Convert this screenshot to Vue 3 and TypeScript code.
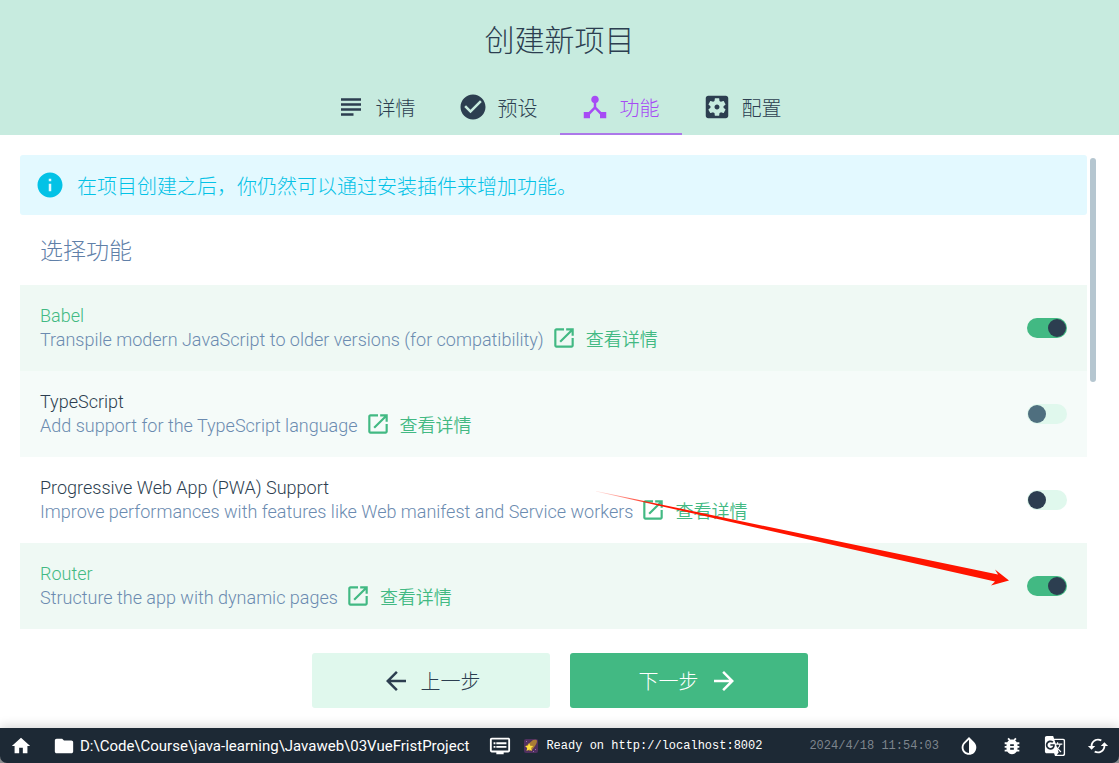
<script setup lang="ts">
import { ref } from 'vue'

interface Tab {
  id: string
  label: string
  icon: string
}

interface Feature {
  id: string
  name: string
  description: string
  enabled: boolean
  hovered?: boolean
}

const icons = {
  subject: 'M14 17H4v2h10v-2zm6-8H4v2h16V9zM4 15h16v-2H4v2zM4 5v2h16V5H4z',
  check: 'M12 2C6.48 2 2 6.48 2 12s4.48 10 10 10 10-4.48 10-10S17.52 2 12 2zm-2 15l-5-5 1.41-1.41L10 14.17l7.59-7.59L19 8l-9 9z',
  hub: 'M17 16l-4-4V8.82C14.16 8.4 15 7.3 15 6c0-1.66-1.34-3-3-3S9 4.34 9 6c0 1.3.84 2.4 2 2.82V12l-4 4H3v5h5v-3.05l4-4.2 4 4.2V21h5v-5h-4z',
  settings: 'M12 10c-1.1 0-2 .9-2 2s.9 2 2 2 2-.9 2-2-.9-2-2-2zm7-7H5c-1.11 0-2 .9-2 2v14c0 1.1.89 2 2 2h14c1.11 0 2-.9 2-2V5c0-1.1-.89-2-2-2zm-1.75 9c0 .23-.02.46-.05.68l1.48 1.16c.13.11.17.3.08.45l-1.4 2.42c-.09.15-.27.21-.43.15l-1.74-.7c-.36.28-.76.51-1.18.69l-.26 1.85c-.03.17-.18.3-.35.3h-2.8c-.17 0-.32-.13-.35-.29l-.26-1.85c-.43-.18-.82-.41-1.18-.69l-1.74.7c-.16.06-.34 0-.43-.15l-1.4-2.42c-.09-.15-.05-.34.08-.45l1.48-1.16c-.03-.23-.05-.46-.05-.69 0-.23.02-.46.05-.68l-1.48-1.16c-.13-.11-.17-.3-.08-.45l1.4-2.42c.09-.15.27-.21.43-.15l1.74.7c.36-.28.76-.51 1.18-.69l.26-1.85c.03-.17.18-.3.35-.3h2.8c.17 0 .32.13.35.29l.26 1.85c.43.18.82.41 1.18.69l1.74-.7c.16-.06.34 0 .43.15l1.4 2.42c.09.15.05.34-.08.45l-1.48 1.16c.03.23.05.46.05.69z',
  info: 'M12 2C6.48 2 2 6.48 2 12s4.48 10 10 10 10-4.48 10-10S17.52 2 12 2zm1 15h-2v-6h2v6zm0-8h-2V7h2v2z',
  open: 'M19 19H5V5h7V3H5c-1.11 0-2 .9-2 2v14c0 1.1.89 2 2 2h14c1.1 0 2-.9 2-2v-7h-2v7zM14 3v2h3.59l-9.83 9.83 1.41 1.41L19 6.41V10h2V3h-7z',
  back: 'M20 11H7.83l5.59-5.59L12 4l-8 8 8 8 1.41-1.41L7.83 13H20v-2z',
  forward: 'M12 4l-1.41 1.41L16.17 11H4v2h12.17l-5.58 5.59L12 20l8-8z',
  home: 'M10 20v-6h4v6h5v-8h3L12 3 2 12h3v8z',
  folder: 'M10 4H4c-1.1 0-1.99.9-1.99 2L2 18c0 1.1.9 2 2 2h16c1.1 0 2-.9 2-2V8c0-1.1-.9-2-2-2h-8l-2-2z',
  dvr: 'M21 3H3c-1.1 0-2 .9-2 2v12c0 1.1.9 2 2 2h5v2h8v-2h5c1.1 0 1.99-.9 1.99-2L23 5c0-1.1-.9-2-2-2zm0 14H3V5h18v12zm-2-9H8v2h11V8zm0 4H8v2h11v-2zM7 8H5v2h2V8zm0 4H5v2h2v-2z',
  invert: 'M17.66 7.93L12 2.27 6.34 7.93c-3.12 3.12-3.12 8.19 0 11.31C7.9 20.8 9.95 21.58 12 21.58c2.05 0 4.1-.78 5.66-2.34 3.12-3.12 3.12-8.19 0-11.31zM12 19.59c-1.6 0-3.11-.62-4.24-1.76C6.62 16.69 6 15.19 6 13.59s.62-3.11 1.76-4.24L12 5.1v14.49z',
  bug: 'M20 8h-2.81c-.45-.78-1.07-1.45-1.82-1.96L17 4.41 15.59 3l-2.17 2.17C12.96 5.06 12.49 5 12 5c-.49 0-.96.06-1.41.17L8.41 3 7 4.41l1.62 1.63C7.88 6.55 7.26 7.22 6.81 8H4v2h2.09c-.05.33-.09.66-.09 1v1H4v2h2v1c0 .34.04.67.09 1H4v2h2.81c1.04 1.79 2.97 3 5.19 3s4.15-1.21 5.19-3H20v-2h-2.09c.05-.33.09-.66.09-1v-1h2v-2h-2v-1c0-.34-.04-.67-.09-1H20V8zm-6 8h-4v-2h4v2zm0-4h-4v-2h4v2z',
  translate: 'M21 4H11l-1-3H3c-1.1 0-2 .9-2 2v15c0 1.1.9 2 2 2h8l1 3h9c1.1 0 2-.9 2-2V6c0-1.1-.9-2-2-2zM7 16c-2.76 0-5-2.24-5-5s2.24-5 5-5c1.35 0 2.48.5 3.35 1.3L9.03 8.57c-.38-.36-1.04-.78-2.03-.78-1.74 0-3.15 1.44-3.15 3.21S5.26 14.21 7 14.21c2.01 0 2.84-1.44 2.92-2.41H7v-1.71h4.68c.07.31.12.61.12 1.02C11.8 13.97 9.89 16 7 16zm6.17-5.42h3.7c-.43 1.25-1.11 2.43-2.05 3.47-.31-.35-.6-.72-.86-1.1l-.79-2.37zm8.33 9.92c0 .55-.45 1-1 1H14l2-2.5-1.04-3.1 3.1 3.1.92-.92-3.3-3.25.02-.02c1.13-1.25 1.93-2.69 2.4-4.22H20v-1.3h-4.53V8h-1.29v1.29h-1.44L11.46 5.5h9.04c.55 0 1 .45 1 1v14z',
  loop: 'M19 8l-4 4h3c0 3.31-2.69 6-6 6-1.01 0-1.97-.25-2.8-.7l-1.46 1.46C8.97 19.54 10.43 20 12 20c4.42 0 8-3.58 8-8h3l-4-4zM6 12c0-3.31 2.69-6 6-6 1.01 0 1.97.25 2.8.7l1.46-1.46C15.03 4.46 13.57 4 12 4c-4.42 0-8 3.58-8 8H1l4 4 4-4H6z',
}

const tabs: Tab[] = [
  { id: 'details', label: '详情', icon: icons.subject },
  { id: 'presets', label: '预设', icon: icons.check },
  { id: 'features', label: '功能', icon: icons.hub },
  { id: 'config', label: '配置', icon: icons.settings },
]
const activeTab = ref('features')

const features = ref<Feature[]>([
  { id: 'babel', name: 'Babel', description: 'Transpile modern JavaScript to older versions (for compatibility)', enabled: true },
  { id: 'ts', name: 'TypeScript', description: 'Add support for the TypeScript language', enabled: false, hovered: true },
  { id: 'pwa', name: 'Progressive Web App (PWA) Support', description: 'Improve performances with features like Web manifest and Service workers', enabled: false },
  { id: 'router', name: 'Router', description: 'Structure the app with dynamic pages', enabled: true },
])

const tools = [
  { label: '切换主题', icon: icons.invert },
  { label: '报告问题', icon: icons.bug },
  { label: '翻译', icon: icons.translate },
  { label: '刷新', icon: icons.loop },
]
</script>

<template>
  <div class="page">
    <header class="header">
      <h1 class="title">创建新项目</h1>
      <nav class="tabs" role="tablist">
        <button
          v-for="tab in tabs"
          :key="tab.id"
          type="button"
          role="tab"
          class="tab"
          :class="{ active: tab.id === activeTab }"
          :aria-selected="tab.id === activeTab"
          @click="activeTab = tab.id"
        >
          <svg class="icon large" viewBox="0 0 24 24"><path :d="tab.icon" /></svg>
          <span>{{ tab.label }}</span>
        </button>
      </nav>
    </header>

    <main class="content">
      <div class="notice">
        <svg class="icon large" viewBox="0 0 24 24"><path :d="icons.info" /></svg>
        <span>在项目创建之后，你仍然可以通过安装插件来增加功能。</span>
      </div>
      <h2 class="section-title">选择功能</h2>
      <div
        v-for="feature in features"
        :key="feature.id"
        class="feature"
        :class="{ enabled: feature.enabled, hovered: feature.hovered }"
      >
        <div class="feature-info">
          <label class="feature-name" :for="feature.id">{{ feature.name }}</label>
          <div class="feature-description">
            <span>{{ feature.description }}</span>
            <a class="more" href="#">
              <svg class="icon medium" viewBox="0 0 24 24"><path :d="icons.open" /></svg>
              <span>查看详情</span>
            </a>
          </div>
        </div>
        <input :id="feature.id" v-model="feature.enabled" class="switch" type="checkbox" role="switch" />
      </div>
      <div class="scroll-thumb"></div>
    </main>

    <div class="actions">
      <button type="button" class="action">
        <svg class="icon large" viewBox="0 0 24 24"><path :d="icons.back" /></svg>
        <span>上一步</span>
      </button>
      <button type="button" class="action primary">
        <span>下一步</span>
        <svg class="icon large" viewBox="0 0 24 24"><path :d="icons.forward" /></svg>
      </button>
    </div>

    <div class="footer-frame">
      <footer class="status">
        <button type="button" class="tool" aria-label="主页">
          <svg class="icon small" viewBox="0 0 24 24"><path :d="icons.home" /></svg>
        </button>
        <button type="button" class="path">
          <svg class="icon small" viewBox="0 0 24 24"><path :d="icons.folder" /></svg>
          <span>D:\Code\Course\java-learning\Javaweb\03VueFristProject</span>
        </button>
        <button type="button" class="log">
          <svg class="icon small" viewBox="0 0 24 24"><path :d="icons.dvr" /></svg>
          <svg class="comet" viewBox="0 0 14 14">
            <rect width="14" height="14" rx="2" fill="#50305f" />
            <path d="M2 7L9 1Q13 0 13 2Q13 5 8 11L5 12z" fill="#a87c35" />
            <path d="M5 4l1.3 2.8 3 .2-2.2 2 .8 3L5.200 10.500 2.500 12l.7-3L1 7l3-.2z" fill="#fddc3d" />
            <path d="M2 2h1v1H2zM11 10h1v1h-1zM9 12h1v1H9z" fill="#9b6cae" />
          </svg>
          <span>Ready on http://localhost:8002</span>
        </button>
        <time class="time">2024/4/18 11:54:03</time>
        <div class="tools">
          <button v-for="tool in tools" :key="tool.label" type="button" class="tool" :aria-label="tool.label">
            <svg class="icon small" viewBox="0 0 24 24"><path :d="tool.icon" /></svg>
          </button>
        </div>
      </footer>
    </div>

    <svg class="pointer" viewBox="0 0 414 98" aria-hidden="true">
      <defs>
        <linearGradient id="fade" gradientUnits="userSpaceOnUse" x1="0" y1="0" x2="60" y2="0">
          <stop offset="0" stop-color="#ff1500" stop-opacity="0.1" />
          <stop offset="1" stop-color="#ff1500" />
        </linearGradient>
      </defs>
      <path d="M0 1L402 84.500L399 79.500L413 90.500L395 95.500L399 91.500L0 1.500z" fill="url(#fade)" />
    </svg>
  </div>
</template>

<style>
body {
  margin: 0;
  background: #fff;
}
</style>

<style scoped>
.page {
  position: relative;
  display: flex;
  flex-direction: column;
  min-height: 100vh;
  font-family: Roboto, "Noto Sans CJK SC", sans-serif;
  font-size: 20px;
  font-weight: 300;
  color: #2c3e50;
}

button {
  padding: 0;
  border: 0;
  background: none;
  font: inherit;
  color: inherit;
  cursor: pointer;
}

.icon {
  flex: none;
  fill: currentColor;
}

.large {
  width: 30px;
  height: 30px;
}

.medium {
  width: 26px;
  height: 26px;
  margin-bottom: 4px;
}

.small {
  width: 22px;
  height: 22px;
}

.header {
  background: #c7ebdf;
}

.title {
  margin: 0;
  padding-top: 21px;
  font-size: 30px;
  font-weight: 300;
  line-height: 40px;
  text-align: center;
}

.tabs {
  display: flex;
  justify-content: center;
  padding-top: 20px;
}

.tab {
  display: flex;
  align-items: center;
  justify-content: center;
  gap: 10px;
  box-sizing: border-box;
  width: 122px;
  height: 54px;
  padding-right: 2px;
  border-bottom: 2px solid transparent;
}

.tab.active {
  color: #a74bf5;
  border-bottom-color: #ac78e9;
}

.content {
  position: relative;
  flex: 1;
  padding: 20px 32px 0 20px;
}

.notice {
  display: flex;
  align-items: center;
  gap: 12px;
  height: 60px;
  padding: 0 15px;
  border-radius: 3px;
  background: #e3f9ff;
  color: #03c2e6;
}

.section-title {
  margin: 0;
  padding: 4px 20px 0;
  font-size: 23px;
  font-weight: 300;
  line-height: 66px;
  color: #6080a8;
}

.feature {
  display: flex;
  align-items: center;
  justify-content: space-between;
  height: 86px;
  padding: 0 20px;
  font-size: 18px;
  line-height: 24px;
}

.feature-info {
  font-weight: 350;
}

.feature-name {
  display: block;
}

.feature-description {
  display: flex;
  align-items: center;
  gap: 7px;
  height: 24px;
  color: #6b8bb0;
}

.more {
  display: flex;
  align-items: center;
  gap: 9px;
  color: #42b983;
  text-decoration: none;
}

.feature.hovered {
  background: #f5fbf9;
}

.feature.enabled {
  background: #eff9f4;
}

.enabled .feature-name {
  color: #42b983;
}

.switch {
  flex: none;
  appearance: none;
  box-sizing: border-box;
  width: 40px;
  height: 20px;
  margin: 0;
  padding: 1px;
  border-radius: 10px;
  background: #e0f8ed;
  cursor: pointer;
}

.switch::before {
  content: "";
  display: block;
  width: 18px;
  height: 18px;
  border-radius: 50%;
  background: #2c3e50;
}

.hovered .switch::before {
  background: #4f6f7f;
}

.switch:checked {
  padding-left: 21px;
  background: #42b983;
}

.scroll-thumb {
  position: absolute;
  top: 23px;
  right: 23px;
  width: 6px;
  height: 224px;
  border-radius: 3px;
  background: #b5c6d0;
}

.actions {
  display: flex;
  justify-content: center;
  gap: 20px;
  padding: 24px 20px 20px;
}

.action {
  display: flex;
  align-items: center;
  justify-content: center;
  gap: 10px;
  width: 238px;
  height: 55px;
  border-radius: 3px;
  background: #e0f8ed;
}

.action.primary {
  background: #42b983;
  color: #fff;
}

.footer-frame {
  background: #8a8c8f;
  box-shadow: 0 -2px 10px rgba(0, 0, 0, 0.16);
}

.status {
  display: flex;
  align-items: center;
  height: 35px;
  padding: 0 10px;
  border-radius: 0 0 7px 7px;
  background: #1d2935;
  color: #fff;
  font-size: 15px;
  font-weight: 400;
}

.tool,
.path,
.log {
  display: flex;
  align-items: center;
}

.path {
  gap: 5px;
  margin-left: 21px;
}

.log {
  margin-left: 20px;
}

.comet {
  width: 14px;
  height: 14px;
  margin: 0 8px 0 13px;
}

.log,
.time {
  font-family: "Liberation Mono", monospace;
  font-size: 12px;
}

.time {
  margin-left: auto;
  color: #7d858d;
}

.tools {
  display: flex;
  gap: 21px;
  margin-left: 19px;
}

.pointer {
  position: absolute;
  top: 490px;
  right: 109px;
  width: 414px;
  height: 98px;
  pointer-events: none;
}
</style>
